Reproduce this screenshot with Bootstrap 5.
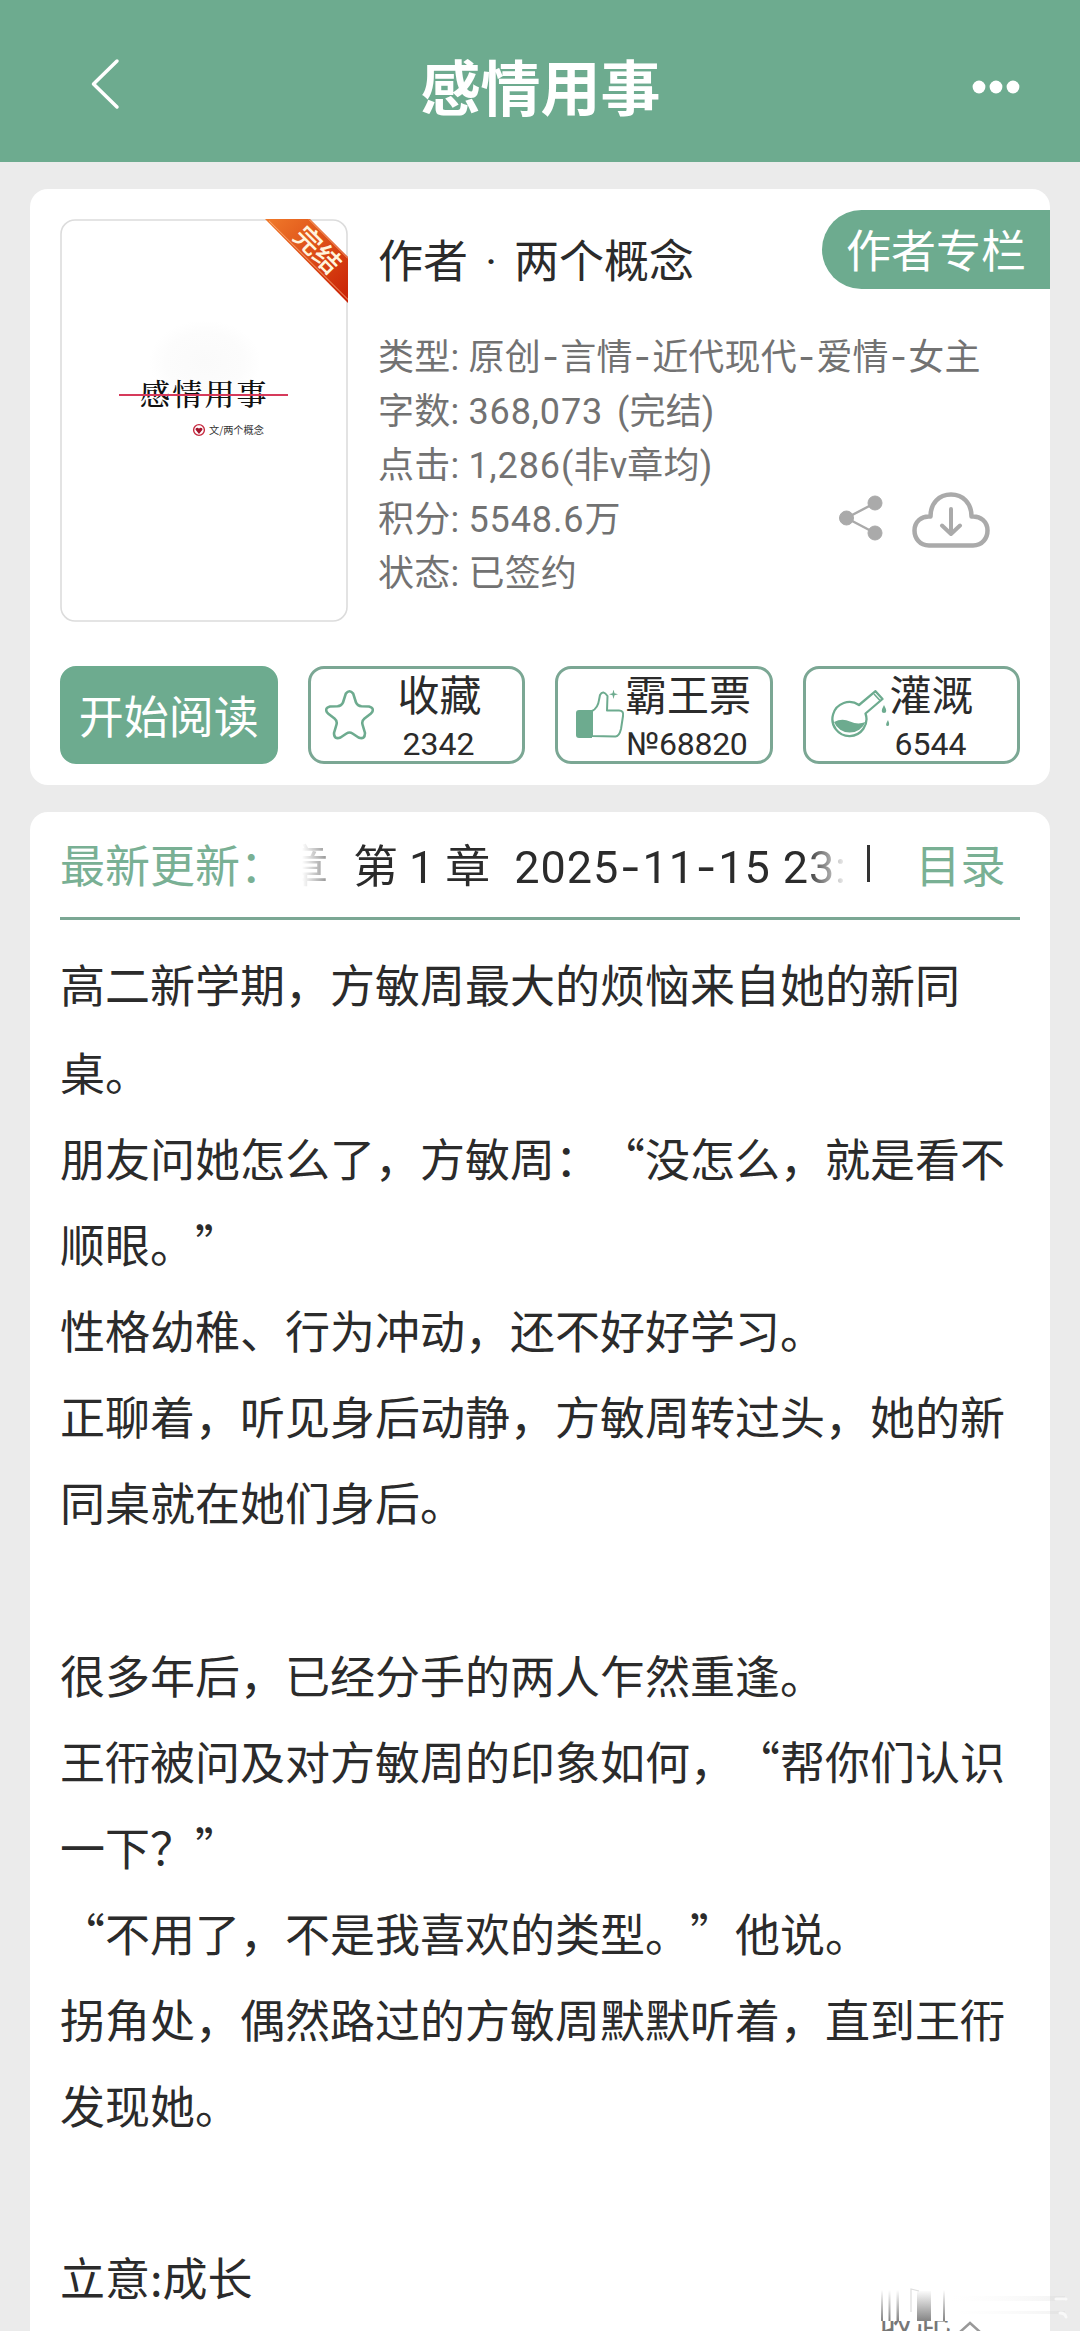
<!DOCTYPE html>
<html lang="zh-CN">
<head>
<meta charset="utf-8">
<meta name="viewport" content="width=device-width, initial-scale=1">
<title>感情用事</title>
<link href="https://cdn.jsdelivr.net/npm/bootstrap@5.3.0/dist/css/bootstrap.min.css" rel="stylesheet">
<style>
:root{--brand:#6dab8f;--line:#7ba794;--ink:#2b2b2b;--meta:#727272}
body{background:#ebebeb;color:var(--ink);font-family:Roboto,"Noto Sans CJK SC",sans-serif;text-spacing-trim:space-all;height:2331px;overflow:hidden}
.topbar{height:162px;background:var(--brand);padding:16px 56px 0 91px}
.topbar h1{font-size:60px;line-height:60px;color:#fff;padding-top:3px}
.slot-back{width:140px}
.slot-more{width:174px}
.panel{background:#fff;border-radius:18px;margin:0 30px}
.book{height:596px;margin-top:27px;padding:30px 30px 0}
.cover{width:288px;height:403px;flex:none}
.cover svg{display:block}
.info{padding-left:30px;padding-top:14px}
.author{font-size:45px;line-height:60px;word-spacing:6px;white-space:nowrap}
.column-tag{right:0;top:21px;width:228px;height:79px;border-radius:40px 0 0 40px;background:var(--brand);color:#fff;font-size:45px;line-height:86px;padding-left:24px;white-space:nowrap}
.meta{font-size:36px;line-height:54px;color:var(--meta);margin-top:38px;letter-spacing:.2px;white-space:nowrap}
.dash{display:inline-block;width:.54em;text-align:center;font-family:Inter,sans-serif;line-height:1}
.num{letter-spacing:.9px}
.tools{right:30px;top:301px;gap:29px}
.actions{margin-top:44px;gap:30px}
.act{height:98px;flex:1 1 0;border:3px solid var(--line);border-radius:16px;background:#fff;color:var(--ink);padding:0}
.act-main{background:var(--brand);border-color:var(--brand);color:#fff;font-size:45px;line-height:99px;text-align:center}
.act-label{font-size:42px;line-height:56px;padding-top:2px}
.act-num{font-size:32px;line-height:38px;margin-left:-2px}
.latest{margin-top:27px;height:1600px;padding:0 30px}
.latest-bar{height:108px;border-bottom:3px solid var(--line);font-size:45px;line-height:105px;padding-top:6px;white-space:nowrap}
.latest-bar .tag{color:#79b094;width:242px}
.ticker{width:552px;overflow:hidden;-webkit-mask-image:linear-gradient(90deg,transparent 0,#000 50px,#000 503px,transparent 546px)}
.ticker div{margin-left:-19px}
.sep{width:2.500px;height:37px;background:#333;margin:-8px 0 0 13px}
.toc{color:#79b094;margin-left:46px}
.intro{font-family:"Noto Sans CJK SC",sans-serif;font-size:45px;line-height:86.1px;padding-top:20px}
.intro p{margin:0;min-height:86.1px;white-space:nowrap}
.intro p:first-child{line-height:87.500px}
.fold{left:879px;top:2292px;width:201px;height:39px;overflow:hidden}
.fold-text{font-size:36px;line-height:54px;color:#777;padding-top:7px}
.smear{left:870px;top:2286px}
</style>
</head>
<body>
<header class="topbar d-flex align-items-center justify-content-between">
  <div class="slot-back">
    <svg width="30" height="52" viewBox="0 0 30 52" fill="none" stroke="#fff" stroke-width="3.5" stroke-linecap="round" stroke-linejoin="round" style="margin-top:-10px"><path d="M26 3 2.5 26 26 49"/></svg>
  </div>
  <h1 class="fw-bold m-0">感情用事</h1>
  <div class="slot-more text-end">
    <svg width="54" height="16" viewBox="0 0 54 16" fill="#fff" style="margin-top:-5px"><circle cx="9" cy="8" r="6.4"/><circle cx="26" cy="8" r="6.4"/><circle cx="43" cy="8" r="6.4"/></svg>
  </div>
</header>

<section class="panel book position-relative">
  <div class="d-flex">
    <div class="cover">
      <svg width="288" height="403" viewBox="0 0 288 403">
        <defs>
          <linearGradient id="rb" x1="205" y1="0" x2="288" y2="84" gradientUnits="userSpaceOnUse"><stop offset="0" stop-color="#f07a2a"/><stop offset="1" stop-color="#c81f04"/></linearGradient>
          <radialGradient id="haze"><stop offset="0" stop-color="#fafafa"/><stop offset=".7" stop-color="#fcfcfc"/><stop offset="1" stop-color="#fff"/></radialGradient>
        </defs>
        <rect x="1" y="1" width="286" height="401" rx="14" fill="#fff" stroke="#dcdcdc" stroke-width="1.6"/>
        <ellipse cx="145" cy="143" rx="56" ry="42" fill="url(#haze)"/>
        <text x="80" y="186" font-size="30" font-weight="500" letter-spacing="2.2" fill="#111" font-family="'Noto Serif CJK SC','Noto Sans CJK SC',serif">感情用事</text>
        <path d="M59 176H228" stroke="#d63a5b" stroke-width="2.2"/>
        <circle cx="139" cy="211" r="5.4" fill="#fff" stroke="#c72a40" stroke-width="1.4"/>
        <path d="M139 215l-3.4-4.2c-.6-2 2.4-3 3.4-1 1-2 4-1 3.4 1z" fill="#a3142b"/>
        <text x="149" y="215" font-size="10.2" fill="#333" font-family="'Noto Sans CJK SC',sans-serif">文/两个概念</text>
        <path d="M205 0H250L288 38V84Z" fill="url(#rb)"/>
        <path d="M209 1.8 288 80.5M249 .5 288 39.5" stroke="#ffb98a" stroke-width="1" fill="none" opacity=".8"/>
        <text transform="translate(257.5 31) rotate(45)" text-anchor="middle" y="9.5" font-size="27" font-weight="500" fill="#fff4dc" font-family="'Noto Sans CJK SC',sans-serif">完结</text>
      </svg>
    </div>
    <div class="info">
      <div class="author">作者 · 两个概念</div>
      <div class="meta">
        <div>类型: 原创<span class="dash">-</span>言情<span class="dash">-</span>近代现代<span class="dash">-</span>爱情<span class="dash">-</span>女主</div>
        <div>字数: <span class="num">368,073 </span>&#8202;(完结)</div>
        <div>点击: <span class="num">1,286</span>(非v章均)</div>
        <div>积分: <span class="num">5548.6</span>万</div>
        <div>状态: 已签约</div>
      </div>
    </div>
  </div>
  <div class="column-tag position-absolute">作者专栏</div>
  <div class="tools position-absolute d-flex align-items-center">
    <svg width="44" height="46" viewBox="0 0 44 46" fill="#aaa" stroke="#aaa" style="margin-top:-3px"><path d="M36 8 7.500 23 36 38" fill="none" stroke-width="2.4"/><circle cx="36" cy="8" r="7"/><circle cx="7.500" cy="23" r="7"/><circle cx="36" cy="38" r="7"/></svg>
    <svg width="78" height="56" viewBox="0 0 78 56" fill="none" stroke="#aaa" stroke-width="4.500" stroke-linecap="round" stroke-linejoin="round" style="margin:2px 30px 0 0"><path d="M17 53.500C7.500 53.500 2.500 46 2.500 38.500 2.500 30 9.500 23.500 18.500 24.500 18.500 11 27 2.500 39 2.500S59.500 11 59.500 24.500C68.500 23.500 75.500 30 75.500 38.500 75.500 46 70.500 53.500 61 53.500Z"/><path d="M39 17V41M30 33.500 39 42 48 33.500" stroke-width="4"/></svg>
  </div>
  <div class="actions d-flex">
    <div class="act act-main">开始阅读</div>
    <div class="act d-flex align-items-center">
      <svg style="margin-left:14px" width="49" height="50" viewBox="0 0 49 50" fill="none" stroke="#6dab8f" stroke-width="2.600" stroke-linejoin="round"><path d="M20.800 3.600Q24.500-1 28.200 3.600L31 12.500Q32.500 16 36.500 16.300L44 16.500Q50.500 18.500 46 23.500L39.500 28.500Q36.500 31 37.500 34.500L40 43Q40 50 33.500 47.500L27.500 43.500Q24.500 41.500 21.500 43.500L15.500 47.500Q9 50 9 43L11.500 34.500Q12.500 31 9.500 28.500L3 23.500Q-1.500 18.500 5 16.500L12.500 16.300Q16.500 16 18 12.500Z"/></svg>
      <div class="text-center" style="margin-left:24px"><div class="act-label">收藏</div><div class="act-num">2342</div></div>
    </div>
    <div class="act d-flex align-items-center">
      <svg style="margin-left:18px" width="50" height="50" viewBox="0 0 50 50" fill="none" stroke="#6dab8f" stroke-width="2" stroke-linejoin="round"><path d="M16 21Q22 18 23 10L24 5Q27-.5 31.500 6L31 20.500H43Q48 20.500 47 26L45 39Q43 47 39 46.500L16 46Z"/><path d="M3 20H16V48H3Q0 48 0 45V23Q0 20 3 20Z" fill="#6dab8f" stroke="none"/><path d="M37.500-.5 38.500 3.300 42 4.300 38.500 5.300 37.500 9 36.500 5.300 33 4.300 36.500 3.300Z" fill="#6dab8f" stroke="none"/></svg>
      <div class="text-center" style="margin-left:-1px"><div class="act-label">霸王票</div><div class="act-num" style="letter-spacing:-.3px">№68820</div></div>
    </div>
    <div class="act d-flex align-items-center">
      <svg style="margin-left:25px" width="60" height="50" viewBox="0 0 60 50" fill="none" stroke="#6dab8f" stroke-width="2.300" stroke-linejoin="round"><path d="M28 15 44.500 1.200 51.500 9 34.500 23.500A17 17 0 1 1 28 15Z"/><path d="M43 4 49 10.500" stroke-width="1.600"/><path d="M3 32Q11 28 19 31.500T34.500 32A17 17 0 0 1 3 32Z" fill="#6dab8f" stroke="none"/><path d="M53 15Q57.500 23 53 23T53 15ZM57 30Q59.500 36 56.500 36T57 30Z" fill="#6dab8f" stroke="none"/></svg>
      <div class="text-center" style="margin-left:-1px"><div class="act-label">灌溉</div><div class="act-num">6544</div></div>
    </div>
  </div>
</section>

<section class="panel latest">
  <div class="latest-bar d-flex align-items-center">
    <div class="tag flex-shrink-0">最新更新：</div>
    <div class="ticker flex-shrink-0"><div><span style="margin-right:25px">章</span>第<span style="margin:0 11px 0 11px">1</span>章<span class="num" style="margin-left:24px">2025<span class="dash" style="width:.52em">-</span>11<span class="dash" style="width:.52em">-</span>15 23:59</span></div></div>
    <div class="sep flex-shrink-0"></div>
    <div class="toc">目录</div>
  </div>
  <div class="intro">
    <p>高二新学期，方敏周最大的烦恼来自她的新同<br>桌。</p>
    <p>朋友问她怎么了，方敏周：“没怎么，就是看不<br>顺眼。”</p>
    <p>性格幼稚、行为冲动，还不好好学习。</p>
    <p>正聊着，听见身后动静，方敏周转过头，她的新<br>同桌就在她们身后。</p>
    <p></p>
    <p>很多年后，已经分手的两人乍然重逢。</p>
    <p>王衎被问及对方敏周的印象如何，“帮你们认识<br>一下？”</p>
    <p>“不用了，不是我喜欢的类型。”他说。</p>
    <p>拐角处，偶然路过的方敏周默默听着，直到王衎<br>发现她。</p>
    <p></p>
    <p>立意:成长</p>
  </div>
</section>

<div class="fold position-absolute"><div class="fold-text">收起</div></div>
<svg class="smear position-absolute" width="210" height="45" viewBox="0 0 210 45">
  <defs>
    <linearGradient id="sm" x1="0" y1="0" x2="0" y2="1"><stop offset="0" stop-color="#777" stop-opacity="0"/><stop offset="1" stop-color="#777" stop-opacity=".9"/></linearGradient>
    <linearGradient id="sh" x1="0" y1="0" x2="1" y2="0"><stop offset="0" stop-color="#eee" stop-opacity="0"/><stop offset="1" stop-color="#ccc" stop-opacity=".7"/></linearGradient>
  </defs>
  <path d="M0 0H180V35H0Z" fill="#fff"/>
  <path d="M11 4h2v31h-2ZM18.500 4h2v31h-2ZM26.500 4h2.500v31h-2.500ZM47 5H61V35H47ZM73 4h2v31h-2Z" fill="url(#sm)"/>
  <path d="M41 26V3l8 2" fill="none" stroke="#ddd" stroke-width="1.200"/>
  <path d="M80 10h115v5H80ZM90 25h105v3H90Z" fill="url(#sh)" opacity=".35"/>
  <path d="M186 13h10M190 27q5 0 6 4" fill="none" stroke="#f8f8f8" stroke-width="3" stroke-linecap="round"/>
  <path d="M90 46 100 37 110 46" fill="none" stroke="#999" stroke-width="2.500"/>
</svg>
<script src="https://cdn.jsdelivr.net/npm/bootstrap@5.3.0/dist/js/bootstrap.bundle.min.js"></script>
</body>
</html>
